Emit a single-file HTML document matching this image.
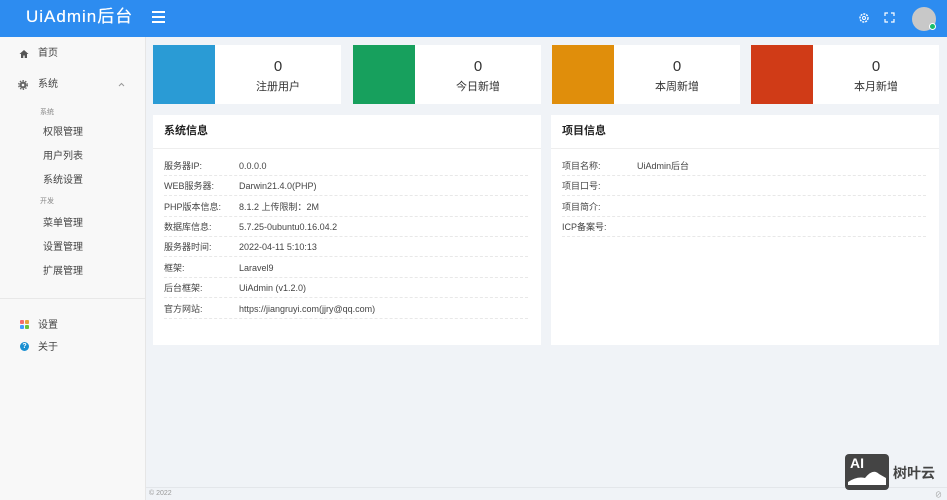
<!DOCTYPE html>
<html><head><meta charset="utf-8"><style>
*{margin:0;padding:0;box-sizing:border-box}
body{width:947px;height:500px;overflow:hidden;font-family:"Liberation Sans","Noto Sans CJK SC",sans-serif;background:#f0f3f7;position:relative;color:#333}
.hd{position:absolute;left:0;top:0;width:947px;height:37px;background:#2d8cf0}
.logo{position:absolute;left:26px;top:6px;color:#fff;font-size:17px;line-height:22px;letter-spacing:1px;text-shadow:0 0 .4px #fff}
.sb{position:absolute;left:0;top:37px;width:146px;height:463px;background:#f8f8f8;border-right:1px solid #e6e6e6}
.it{position:absolute;font-size:10px;line-height:14px;color:#444}
.sm{position:absolute;left:40px;font-size:7px;line-height:10px;color:#888}
.card{position:absolute;top:45px;height:59px;width:188px;background:#fff}
.card .c{position:absolute;left:0;top:0;width:62px;height:59px}
.card .n{position:absolute;left:62px;right:0;top:13px;text-align:center;font-size:15px;line-height:18px;color:#333}
.card .l{position:absolute;left:62px;right:0;top:34px;text-align:center;font-size:11px;line-height:16px;color:#333}
.pn{position:absolute;top:115px;height:230px;background:#fff}
.pt{position:absolute;left:11px;top:8px;font-size:11px;line-height:16px;font-weight:bold;color:#222}
.ph{position:absolute;left:0;right:0;top:33px;border-top:1px solid #eee}
.row{position:absolute;left:11px;right:13px;height:20px;border-bottom:1px dashed #e8e8e8;font-size:9px;color:#444}
.row span{position:absolute;top:4px;line-height:13px}
</style></head><body>
<div class="hd"><div class="logo">UiAdmin后台</div>
<div style="position:absolute;left:152px;top:11px;width:13px">
<div style="height:1.5px;background:#fff;margin-bottom:3.5px"></div><div style="height:1.5px;background:#fff;margin-bottom:3.5px"></div><div style="height:1.5px;background:#fff"></div></div>
<svg style="position:absolute;left:858px;top:12px" width="12" height="12" viewBox="0 0 12 12"><circle cx="6" cy="6" r="4" fill="none" stroke="#fff" stroke-width="1.4" stroke-dasharray="2 1"/><circle cx="6" cy="6" r="1.5" fill="none" stroke="#fff"/></svg>
<svg style="position:absolute;left:884px;top:12px" width="11" height="11" viewBox="0 0 11 11" fill="none" stroke="#fff" stroke-width="1.2"><path d="M1 4V1h3M7 1h3v3M10 7v3H7M4 10H1V7"/></svg>
<div style="position:absolute;left:912px;top:7px;width:24px;height:24px;border-radius:50%;background:#c8c8c8"></div>
<div style="position:absolute;left:929px;top:23px;width:7px;height:7px;border-radius:50%;background:#19be6b;border:1.5px solid #fff"></div>
</div>
<div class="sb">
<svg style="position:absolute;left:19px;top:12px" width="10" height="10" viewBox="0 0 10 10"><path d="M5 1L0.5 5H2v4h2.3V6.5h1.4V9H8V5h1.5z" fill="#555"/></svg><div class="it" style="left:38px;top:10px">首页</div>
<svg style="position:absolute;left:18px;top:43px" width="10" height="10" viewBox="0 0 10 10"><circle cx="5" cy="5" r="3.5" fill="#666"/><circle cx="5" cy="5" r="4.3" fill="none" stroke="#666" stroke-width="1.4" stroke-dasharray="1.4 1.4"/><circle cx="5" cy="5" r="1.3" fill="#f8f8f8"/></svg>
<div class="it" style="left:38px;top:41px">系统</div>
<svg style="position:absolute;left:118px;top:45px" width="7" height="5" viewBox="0 0 7 5"><path d="M1 4l2.5-2.5L6 4" fill="none" stroke="#999"/></svg>
<div class="sm" style="top:71px">系统</div>
<div class="it" style="left:43px;top:89px">权限管理</div>
<div class="it" style="left:43px;top:113px">用户列表</div>
<div class="it" style="left:43px;top:137px">系统设置</div>
<div class="sm" style="top:160px">开发</div>
<div class="it" style="left:43px;top:180px">菜单管理</div>
<div class="it" style="left:43px;top:204px">设置管理</div>
<div class="it" style="left:43px;top:228px">扩展管理</div>
<div style="position:absolute;left:0;right:0;top:261px;border-top:1px solid #e8e8e8"></div>
<div style="position:absolute;left:20px;top:283px;width:4px;height:4px;background:#f56c6c;border-radius:1px"></div>
<div style="position:absolute;left:25px;top:283px;width:4px;height:4px;background:#e6a23c;border-radius:1px"></div>
<div style="position:absolute;left:20px;top:288px;width:4px;height:4px;background:#409eff;border-radius:1px"></div>
<div style="position:absolute;left:25px;top:288px;width:4px;height:4px;background:#67c23a;border-radius:1px"></div>
<div class="it" style="left:38px;top:282px">设置</div>
<div style="position:absolute;left:20px;top:305px;width:9px;height:9px;border-radius:50%;background:#1a8fd1;color:#fff;font-size:7px;font-weight:bold;text-align:center;line-height:9px">?</div>
<div class="it" style="left:38px;top:304px">关于</div>
</div>
<div class="card" style="left:153px"><div class="c" style="background:#2a9bd5"></div><div class="n">0</div><div class="l">注册用户</div></div>
<div class="card" style="left:353px"><div class="c" style="background:#17a05d"></div><div class="n">0</div><div class="l">今日新增</div></div>
<div class="card" style="left:552px"><div class="c" style="background:#e08e0b"></div><div class="n">0</div><div class="l">本周新增</div></div>
<div class="card" style="left:751px"><div class="c" style="background:#d03b17"></div><div class="n">0</div><div class="l">本月新增</div></div>
<div class="pn" style="left:153px;width:388px"><div class="pt">系统信息</div><div class="ph"></div>
<div class="row" style="top:41px"><span style="left:0">服务器IP:</span><span style="left:75px">0.0.0.0</span></div>
<div class="row" style="top:61px"><span style="left:0">WEB服务器:</span><span style="left:75px">Darwin21.4.0(PHP)</span></div>
<div class="row" style="top:82px"><span style="left:0">PHP版本信息:</span><span style="left:75px">8.1.2 上传限制：2M</span></div>
<div class="row" style="top:102px"><span style="left:0">数据库信息:</span><span style="left:75px">5.7.25-0ubuntu0.16.04.2</span></div>
<div class="row" style="top:122px"><span style="left:0">服务器时间:</span><span style="left:75px">2022-04-11 5:10:13</span></div>
<div class="row" style="top:143px"><span style="left:0">框架:</span><span style="left:75px">Laravel9</span></div>
<div class="row" style="top:163px"><span style="left:0">后台框架:</span><span style="left:75px">UiAdmin (v1.2.0)</span></div>
<div class="row" style="top:184px"><span style="left:0">官方网站:</span><span style="left:75px">https://jiangruyi.com(jjry@qq.com)</span></div>
</div>
<div class="pn" style="left:551px;width:388px"><div class="pt">项目信息</div><div class="ph"></div>
<div class="row" style="top:41px"><span style="left:0">项目名称:</span><span style="left:75px">UiAdmin后台</span></div>
<div class="row" style="top:61px"><span style="left:0">项目口号:</span></div>
<div class="row" style="top:82px"><span style="left:0">项目简介:</span></div>
<div class="row" style="top:102px"><span style="left:0">ICP备案号:</span></div>
</div>
<div style="position:absolute;left:146px;right:0;top:487px;border-top:1px solid #e3e6ea;font-size:7px;color:#999;padding:2px 3px">© 2022<span style="position:absolute;right:5px;top:2px">⊘</span></div>
<div style="position:absolute;left:845px;top:454px;width:44px;height:36px;border-radius:4px;background:#444;overflow:hidden">
<div style="position:absolute;left:5px;top:1px;color:#fff;font-weight:bold;font-size:14px">AI</div>
<svg style="position:absolute;left:0;top:0" width="44" height="36" viewBox="0 0 44 36"><path d="M3 31L3 28Q12 22 20 24Q28 14 34 20L41 24V31Z" fill="#fff"/></svg></div>
<div style="position:absolute;left:893px;top:463px;font-size:14px;font-weight:bold;color:#444">树叶云</div>
</body></html>
